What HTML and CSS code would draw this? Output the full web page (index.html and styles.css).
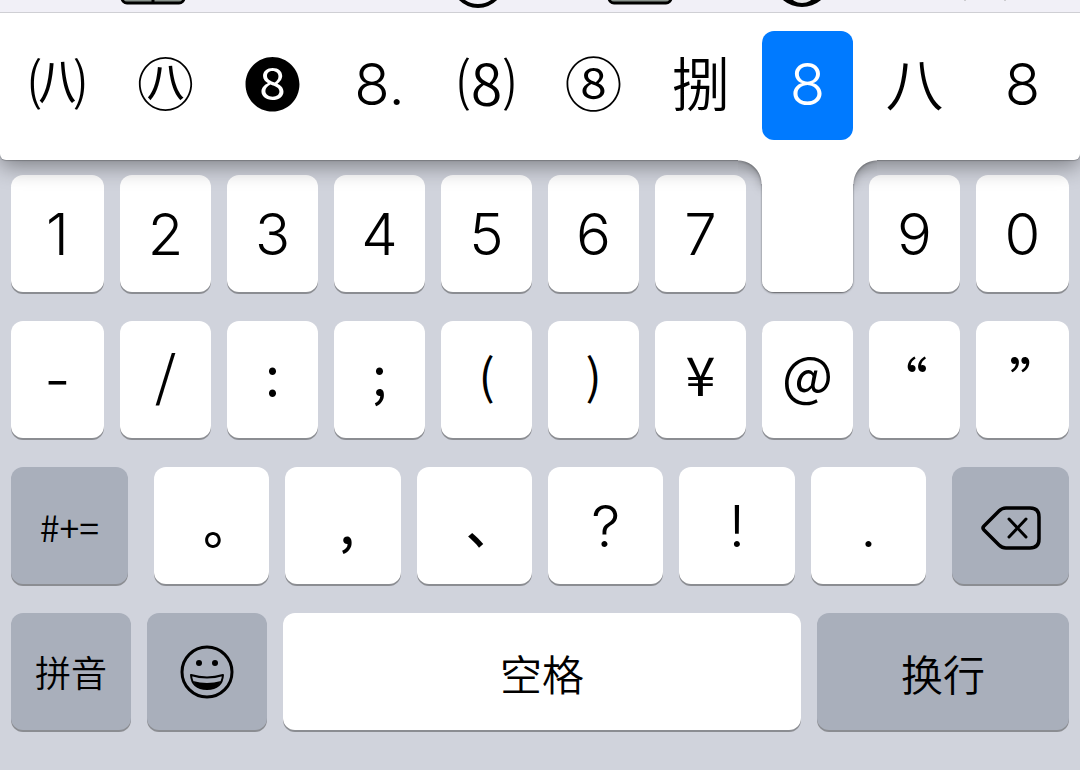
FILE: index.html
```html
<!DOCTYPE html>
<html lang="zh-CN">
<head>
  <meta charset="UTF-8" />
  <meta name="viewport" content="width=device-width, initial-scale=1.0" />
  <title>数字键盘</title>
  <link rel="stylesheet" href="styles.css">
</head>
<body>
  <div class="toolbar">
    <svg viewBox="0 0 68 12"><rect x="3" y="-40" width="62" height="43" rx="5" fill="#87918a" stroke="#000" stroke-width="3"/><path d="M34 0v3" stroke="#000" stroke-width="3"/></svg>
    <span></span>
    <svg viewBox="0 0 68 12"><circle cx="34" cy="-19" r="25" fill="none" stroke="#000" stroke-width="4"/></svg>
    <svg viewBox="0 0 68 12"><rect x="3" y="-40" width="62" height="43" rx="5" fill="#87918a" stroke="#000" stroke-width="3"/></svg>
    <svg viewBox="0 0 68 12"><ellipse cx="34" cy="-15" rx="26" ry="22" fill="#000"/><ellipse cx="34" cy="-4" rx="11" ry="7" fill="#e6e6e8"/></svg>
    <svg viewBox="0 0 68 12"><path d="M33 0h2M73 0h2" stroke="#aaa" stroke-width="1"/></svg>
  </div>

  <main class="keyboard">
    <div class="popup columns">
      <button class="option cjk">㈧</button>
      <button class="option cjk">㊇</button>
      <button class="option cjk">❽</button>
      <button class="option">8.</button>
      <button class="option cjk">⑻</button>
      <button class="option cjk">⑧</button>
      <button class="option cjk">捌</button>
      <button class="option selected">8</button>
      <button class="option cjk">八</button>
      <button class="option">8</button>
    </div>

    <div class="rows">
      <div class="columns">
        <button class="key">1</button>
        <button class="key">2</button>
        <button class="key">3</button>
        <button class="key">4</button>
        <button class="key">5</button>
        <button class="key">6</button>
        <button class="key">7</button>
        <button class="key pressed" aria-label="8"></button>
        <button class="key">9</button>
        <button class="key">0</button>
      </div>

      <div class="columns">
        <button class="key">-</button>
        <button class="key cjk">/</button>
        <button class="key cjk">:</button>
        <button class="key cjk">;</button>
        <button class="key cjk paren">(</button>
        <button class="key cjk paren">)</button>
        <button class="key cjk">¥</button>
        <button class="key cjk">@</button>
        <button class="key cjk quote">“</button>
        <button class="key cjk quote">”</button>
      </div>

      <div class="symbols">
        <button class="key dark more">#+=</button>
        <div class="marks">
          <button class="key cjk stop">。</button>
          <button class="key cjk stop">,</button>
          <button class="key cjk stop">、</button>
          <button class="key">?</button>
          <button class="key">!</button>
          <button class="key">.</button>
        </div>
        <button class="key dark delete" aria-label="删除">
          <svg viewBox="0 0 60 44" width="60" height="44" fill="none" stroke="#000" stroke-width="3" stroke-linecap="round" stroke-linejoin="round">
            <path stroke-width="3.5" d="M3 20 18 5Q21 2 25 2H49Q58 2 58 11V33Q58 42 49 42H25Q21 42 18 39L3 24Q1 22 3 20Z"/>
            <path d="M28 13 45 31M45 13 28 31"/>
          </svg>
        </button>
      </div>

      <div class="bottom">
        <button class="key dark pinyin">拼音</button>
        <button class="key dark emoji" aria-label="表情">
          <svg viewBox="0 0 54 54" width="54" height="54">
            <circle cx="27" cy="27" r="25" fill="none" stroke="#000" stroke-width="3"/>
            <circle cx="19" cy="18" r="3" fill="#000"/>
            <circle cx="35" cy="18" r="3" fill="#000"/>
            <path d="M11 30Q27 35 43 30Q42 44 27 44Q12 44 11 30Z" fill="none" stroke="#000" stroke-width="2" stroke-linejoin="round"/>
            <path d="M13 36Q27 40 41 36Q37 44 27 44Q17 44 13 36Z" fill="#000"/>
          </svg>
        </button>
        <button class="key word space">空格</button>
        <button class="key dark word enter">换行</button>
      </div>
    </div>
  </main>
</body>
</html>
```
FILE: styles.css
```css
* {
  box-sizing: border-box;
}
body {
  margin: 0;
  min-height: 100vh;
  background: #d0d3dc;
  color: #000;
  font-family: Inter, "Noto Sans CJK SC", sans-serif;
  overflow-x: hidden;
}
button {
  border: none;
  margin: 0;
  padding: 0;
  font-family: inherit;
  font-weight: 350;
  color: inherit;
  cursor: pointer;
}

/* app bar */
.toolbar {
  display: grid;
  grid-template-columns: repeat(6, 1fr);
  justify-items: center;
  height: 13px;
  padding: 0 34px 0 72px;
  background: #f1f0f7;
  border-bottom: 1px solid #cfcfd4;
  overflow: hidden;
}
.toolbar svg {
  width: 68px;
  height: 12px;
}
.toolbar svg:last-child {
  overflow: visible;
}

/* shared by the popup and the first two key rows */
.columns {
  display: grid;
  grid-template-columns: 93fr repeat(8, 91fr) 93fr;
  gap: 16px;
}

.popup {
  position: relative;
  z-index: 1;
  padding: 18px 11px 20px;
  background: #fff;
  border-radius: 0 0 6px 6px;
  box-shadow: 0 1px 1px rgba(0,0,0,0.2), 0 6px 22px rgba(0,0,0,0.4);
  clip-path: inset(0 0 -40px 0);
}
.option {
  display: flex;
  align-items: center;
  justify-content: center;
  height: 109px;
  padding-bottom: 4px;
  background: none;
  border-radius: 12px;
  font-size: 58px;
  line-height: 1;
}
.option.selected {
  background: #007aff;
  color: #fff;
}
.cjk {
  font-family: "Noto Sans CJK SC", sans-serif;
  font-feature-settings: "halt";
}
.option.cjk {
  padding-bottom: 10px;
}

.rows {
  display: flex;
  flex-direction: column;
  gap: 29px;
  padding: 15px 11px 40px;
}
.key {
  display: flex;
  align-items: center;
  justify-content: center;
  height: 117px;
  background: #fff;
  border-radius: 12px;
  box-shadow: 0 2px 0 #8b8d92;
  font-size: 58px;
  line-height: 1;
}
.key.dark {
  background: #a9afbb;
}
.key.cjk {
  padding-bottom: 14px;
  font-size: 54px;
  font-weight: 400;
}
.key.paren {
  font-size: 48px;
}
.key.quote {
  padding-bottom: 0;
}
.key.stop {
  padding-bottom: 8px;
  padding-left: 8px;
  font-size: 50px;
  font-weight: 500;
}

/* key under the finger, joined to the popup above it */
.key.pressed {
  position: relative;
  z-index: 2;
  box-shadow: 0 1px 2px rgba(0,0,0,0.6);
}
.pressed::before {
  content: "";
  position: absolute;
  top: -15px;
  left: -24px;
  right: -24px;
  height: 24px;
  background:
    radial-gradient(circle at 0 100%, transparent 23px, #fff 24px) left / 24px 24px no-repeat,
    radial-gradient(circle at 100% 100%, transparent 23px, #fff 24px) right / 24px 24px no-repeat,
    linear-gradient(#fff, #fff) center / calc(100% - 48px) 100% no-repeat;
  filter: drop-shadow(0 1px 1px rgba(0,0,0,0.3)) drop-shadow(0 3px 5px rgba(0,0,0,0.25));
  clip-path: inset(0 0 -40px 0);
}
.pressed::after {
  content: "";
  position: absolute;
  top: -15px;
  left: 0;
  right: 0;
  bottom: 0;
  background: #fff;
  border-radius: 0 0 12px 12px;
}

.symbols {
  display: flex;
  gap: 26px;
}
.marks {
  flex: 1;
  display: grid;
  grid-template-columns: repeat(6, 1fr);
  gap: 16px;
}
.more, .delete {
  width: 117px;
}
.key.more {
  font-family: "Noto Sans CJK SC", sans-serif;
  font-size: 36px;
}
.key.delete {
  padding-top: 4px;
}

.bottom {
  display: flex;
  gap: 16px;
}
.pinyin, .emoji {
  width: 120px;
}
.key.pinyin {
  padding-top: 4px;
  font-size: 36px;
}
.key.word {
  padding-top: 8px;
  font-size: 42px;
}
.space {
  flex: 1;
}
.enter {
  width: 252px;
}
```
